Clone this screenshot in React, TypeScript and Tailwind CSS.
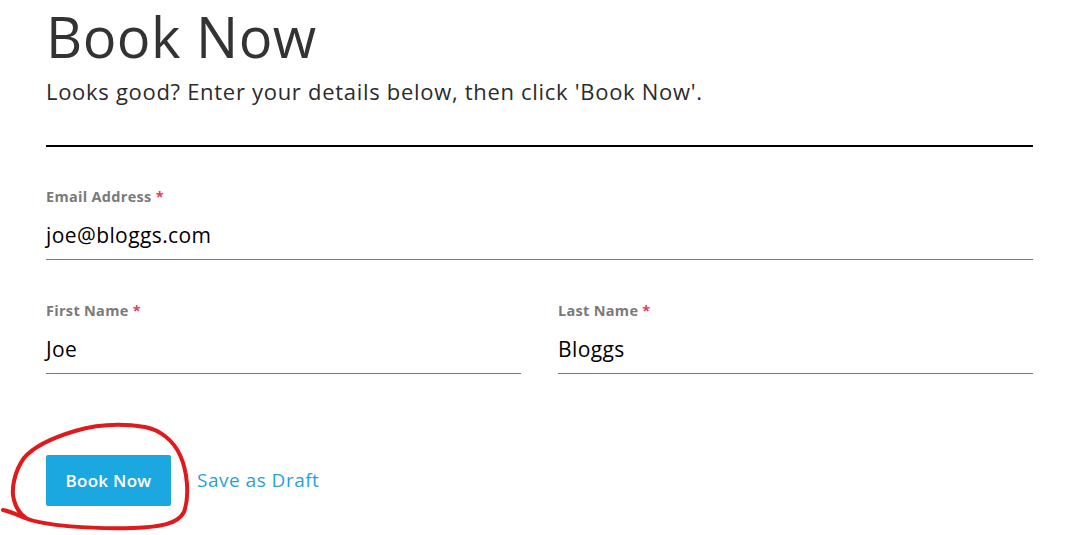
import React from "react";

const font = { fontFamily: '"Open Sans", "Noto Sans", sans-serif' };

function Field({ label, value }: { label: string; value: string }) {
  return (
    <div className="flex flex-col">
      <div className="text-[14.5px] leading-[20px] font-bold text-[#7a7a7a] tracking-[0.3px]">
        {label} <span className="text-[#e0405a]">*</span>
      </div>
      <div className="mt-[16px] text-[21px] leading-[24px] text-black tracking-[0.4px]">{value}</div>
      <div className="mt-[12px] h-px bg-[#7a7a74]" />
    </div>
  );
}

export default function App() {
  return (
    <div className="relative w-[1074px] h-[535px] bg-white overflow-hidden" style={font}>
      <div className="pl-[46px] pr-[41px]">
        <h1 className="text-[56px] leading-[72px] text-[#333333] font-normal tracking-[0.5px]">Book Now</h1>
        <p className="mt-[5px] text-[22px] leading-[28px] text-[#2b2b2b] tracking-[0.7px]">
          Looks good? Enter your details below, then click 'Book Now'.
        </p>
        <div className="mt-[40px] h-[2px] bg-black" />
        <div className="mt-[40px]">
          <Field label="Email Address" value="joe@bloggs.com" />
        </div>
        <div className="mt-[41px] grid grid-cols-2 gap-[37px]">
          <Field label="First Name" value="Joe" />
          <Field label="Last Name" value="Bloggs" />
        </div>
        <div className="mt-[81px] flex items-center gap-[26px]">
          <button className="h-[51px] w-[125px] rounded-[2px] bg-[#1ba8e1] text-white text-[17px] font-semibold tracking-[0.3px]">
            Book Now
          </button>
          <span className="text-[19px] text-[#2a9fd8] tracking-[0.5px]">Save as Draft</span>
        </div>
      </div>
      <svg className="absolute left-0 top-0 pointer-events-none" width="1074" height="535" viewBox="0 0 1074 535">
        <path
          d="M3 510 C 12 512, 18 515, 25 518 C 45 526, 90 529, 133 528 C 160 527, 178 524, 184 512 C 190 495, 187 470, 180 455 C 173 440, 160 430, 145 427 C 120 423, 95 425, 75 431 C 55 437, 35 445, 24 458 C 14 472, 11 490, 14 500 C 16 508, 20 514, 26 518"
          fill="none"
          stroke="#e0191b"
          strokeWidth="4"
          strokeLinecap="round"
          strokeLinejoin="round"
        />
      </svg>
    </div>
  );
}
